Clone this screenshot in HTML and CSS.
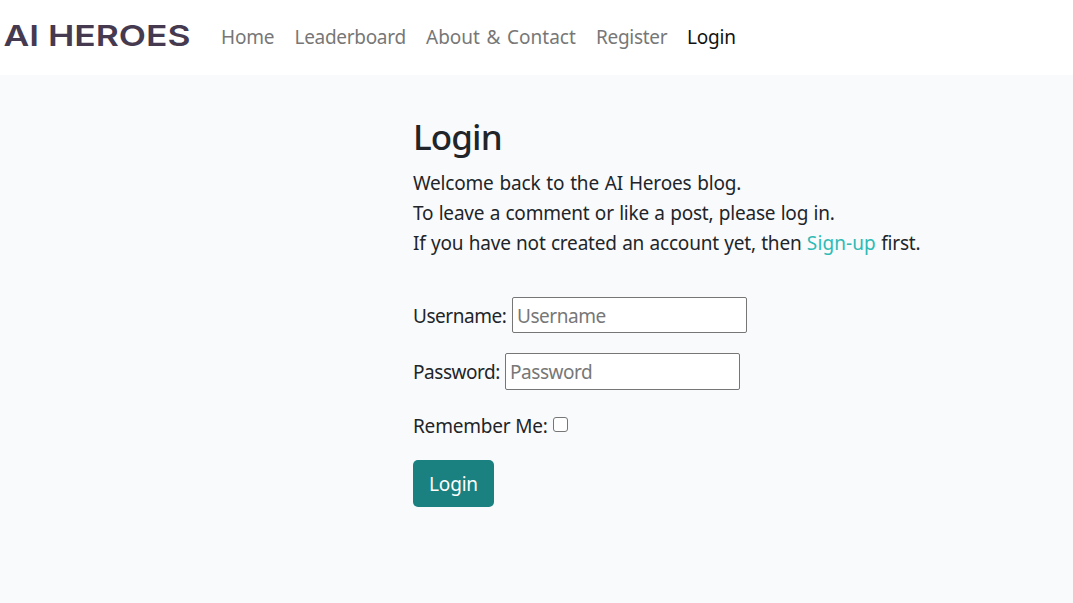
FILE: index.html
```html
<!DOCTYPE html>
<html lang="en">
<head>
<meta charset="utf-8">
<title>AI Heroes - Login</title>
<link rel="stylesheet" href="styles.css">
</head>
<body>
<header class="navbar">
  <a class="brand" href="#" aria-label="AI Heroes">
    <svg class="brand-art" width="191" height="40" viewBox="0 0 191 40"><text class="brand-text" x="3.5" y="30" textLength="187" lengthAdjust="spacingAndGlyphs">AI HEROES</text></svg>
  </a>
  <nav class="nav">
    <a class="nav-link home" href="#">Home</a>
    <a class="nav-link leaderboard" href="#">Leaderboard</a>
    <a class="nav-link about" href="#">About &amp; Contact</a>
    <a class="nav-link register" href="#">Register</a>
    <a class="nav-link active" href="#">Login</a>
  </nav>
</header>
<main class="content">
  <h1 class="title">Login</h1>
  <p class="intro"><span class="line-one">Welcome back to the AI Heroes blog.</span><br><span class="line-two">To leave a comment or like a post, please log in.</span><br><span class="line-three">If you have not created an account yet, then <a class="signup" href="#">Sign-up</a> first.</span></p>
  <form class="form">
    <div class="field user"><label class="label-user" for="user">Username:</label><input class="input" id="user" type="text" placeholder="Username"></div>
    <div class="field password"><label class="label-pass" for="pass">Password:</label><input class="input" id="pass" type="password" placeholder="Password"></div>
    <div class="remember"><label class="label-remember" for="remember">Remember Me:</label><input class="check" id="remember" type="checkbox"></div>
    <button class="submit" type="button">Login</button>
  </form>
</main>
</body>
</html>
```
FILE: styles.css
```css
* { box-sizing: border-box; }
body {
  margin: 0;
  min-height: 603px;
  background: #f9fafc;
  color: #212529;
  font: 19px/30px "Segoe UI", "Noto Sans", sans-serif;
  letter-spacing: -0.2px;
}
a { text-decoration: none; }
.navbar { display: flex; height: 75px; background: #fff; }
.brand { width: 191px; padding-top: 16px; }
.brand-art { display: block; }
.brand-text { font: 600 29px "Inter", sans-serif; fill: #463a50; letter-spacing: 0; }
.nav { display: flex; margin-left: 30px; padding-top: 22px; }
.nav-link { color: #777; white-space: nowrap; }
.home { width: 73.5px; }
.leaderboard { width: 131.5px; letter-spacing: -0.3px; }
.about { width: 170px; letter-spacing: 0; word-spacing: 1.7px; }
.register { width: 91px; letter-spacing: -0.3px; }
.active { color: #111; }
.content { padding: 41px 0 0 413px; }
.title { margin: 0 0 10px; font-size: 35px; line-height: 42px; font-weight: 500; letter-spacing: -0.9px; }
.intro { margin: 0; white-space: nowrap; }
.line-one { word-spacing: 1.2px; }
.line-two { word-spacing: 0.6px; }
.line-three { word-spacing: 0.65px; }
.signup { color: #2ebab5; letter-spacing: 0.1px; }
.form { margin-top: 39px; }
.field { display: flex; align-items: center; height: 36px; margin-bottom: 20px; white-space: nowrap; letter-spacing: -0.45px; }
.user .input { padding-top: 3px; }
.password { height: 37px; margin-bottom: 21px; }
.label-user { width: 99px; padding-top: 2px; }
.label-pass { width: 92px; }
.label-remember { width: 140px; }
.input {
  width: 235px;
  height: 100%;
  padding: 1px 4px;
  border: 1px solid #767676;
  border-radius: 2px;
  background: #fff;
  font: inherit;
  letter-spacing: inherit;
}
.input::placeholder { color: #777; }
.remember { display: flex; height: 30px; white-space: nowrap; }
.check { width: 15px; height: 15px; margin: 6px 0 0; appearance: none; border: 1px solid #767676; border-radius: 3px; background: #fff; }
.submit { display: block; width: 81px; height: 47px; margin-top: 19px; padding: 0; border: 0; border-radius: 5px; background: #1a8180; color: #fff; font: inherit; letter-spacing: inherit; }
```
